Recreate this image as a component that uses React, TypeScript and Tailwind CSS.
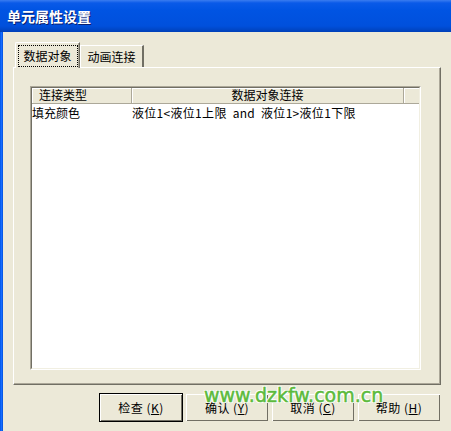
import React from 'react';

const ui = "font-['SimSun','Noto_Sans_CJK_SC',sans-serif]";

const XpButton: React.FC<{ label: string; hot: string; primary?: boolean }> = ({ label, hot, primary }) => (
  <button
    className={`w-[84px] h-[29px] bg-[#ece9d8] text-[12px] text-black flex items-center justify-center ${
      primary
        ? 'border border-black shadow-[inset_1px_1px_0_#fff,inset_-1px_-1px_0_#716f64]'
        : 'border border-[#ece9d8] shadow-[inset_1px_1px_0_#fff,inset_-1px_-1px_0_#716f64]'
    }`}
  >
    <span className="whitespace-pre tracking-[0.5px]">
      {label} (<span className="underline">{hot}</span>)
    </span>
  </button>
);

export default function App() {
  return (
    <div className={`w-[451px] h-[431px] bg-[#ece9d8] relative overflow-hidden flex flex-col ${ui}`}>
      {/* title bar */}
      <div className="h-[32px] shrink-0 bg-[linear-gradient(to_bottom,#3a7cf0_0px,#0a5ae8_3px,#0054e3_10px,#0050dc_26px,#0040b8_32px)] flex items-center pl-[7px]">
        <span className="text-white font-bold text-[14px] [text-shadow:1px_1px_0_#0a1e6e] font-['Noto_Sans_CJK_SC',sans-serif]">
          单元属性设置
        </span>
      </div>

      <div className="flex flex-1">
        <div className="w-[3px] bg-[linear-gradient(to_right,#0055e5,#166cff,#0050d8)]" />

        <div className="flex-1 flex flex-col pl-[10px] pr-[10px] pt-[10px]">
          {/* tabs */}
          <div className="flex items-end h-[25px] relative z-10">
            <div className="h-[26px] w-[65px] ml-[2px] -mb-[1px] bg-[#ece9d8] border-l border-t border-white rounded-tl-[2px] border-r border-r-[#716f64] shadow-[inset_-1px_0_0_#aca899] flex items-start justify-center pt-[2px]">
              <span className="border border-dotted border-black px-[2px] text-[12px] h-[22px] w-[60px] flex items-center justify-center">数据对象</span>
            </div>
            <div className="h-[22px] w-[64px] bg-[#ece9d8] border-l border-t border-white border-r-2 border-r-[#716f64] flex items-center justify-center text-[12px]">
              动画连接
            </div>
          </div>

          {/* panel */}
          <div className="h-[318px] border-l border-t border-white border-r border-b border-r-[#716f64] border-b-[#716f64] shadow-[inset_-1px_-1px_0_#aca899] pt-[18px] pl-[16px] pr-[19px] pb-[14px] flex">
            <div className="flex-1 border border-t-[#aca899] border-l-[#aca899] border-r-white border-b-white">
              <div className="h-full border border-t-[#716f64] border-l-[#716f64] border-r-[#f1efe2] border-b-[#f1efe2] bg-white flex flex-col">
                <div className="flex h-[16px] text-[12px] leading-[14px]">
                  <div className="w-[100px] border-r border-b border-r-[#aca899] border-b-[#aca899] bg-[#ece9d8] shadow-[inset_1px_1px_0_#fff] pl-[7px]">
                    连接类型
                  </div>
                  <div className="w-[272px] border-r border-b border-r-[#aca899] border-b-[#aca899] bg-[#ece9d8] shadow-[inset_1px_1px_0_#fff] text-center">
                    数据对象连接
                  </div>
                  <div className="flex-1 border-b border-b-[#aca899] bg-[#ece9d8] shadow-[inset_1px_1px_0_#fff]" />
                </div>
                <div className="flex h-[17px] text-[12px] leading-[17px]">
                  <div className="w-[100px]">填充颜色</div>
                  <div className="whitespace-pre tracking-[0.3px]">液位1&lt;液位1上限  and  液位1&gt;液位1下限</div>
                </div>
              </div>
            </div>
          </div>

          {/* buttons */}
          <div className="flex justify-end gap-[2px] mt-[8px] relative">
            <XpButton label="检查" hot="K" primary />
            <XpButton label="确认" hot="Y" />
            <XpButton label="取消" hot="C" />
            <XpButton label="帮助" hot="H" />
            <div className="absolute left-[191px] top-[-7px] text-[19px] font-['DejaVu_Sans',sans-serif] text-[#5cba3c] [-webkit-text-stroke:0.5px_#5cba3c] [text-shadow:1px_1px_0_#fff,-1px_-1px_0_#fff,1px_-1px_0_#fff,-1px_1px_0_#fff] pointer-events-none leading-none">
              www.dzkfw.com.cn
            </div>
          </div>
        </div>
      </div>
    </div>
  );
}
